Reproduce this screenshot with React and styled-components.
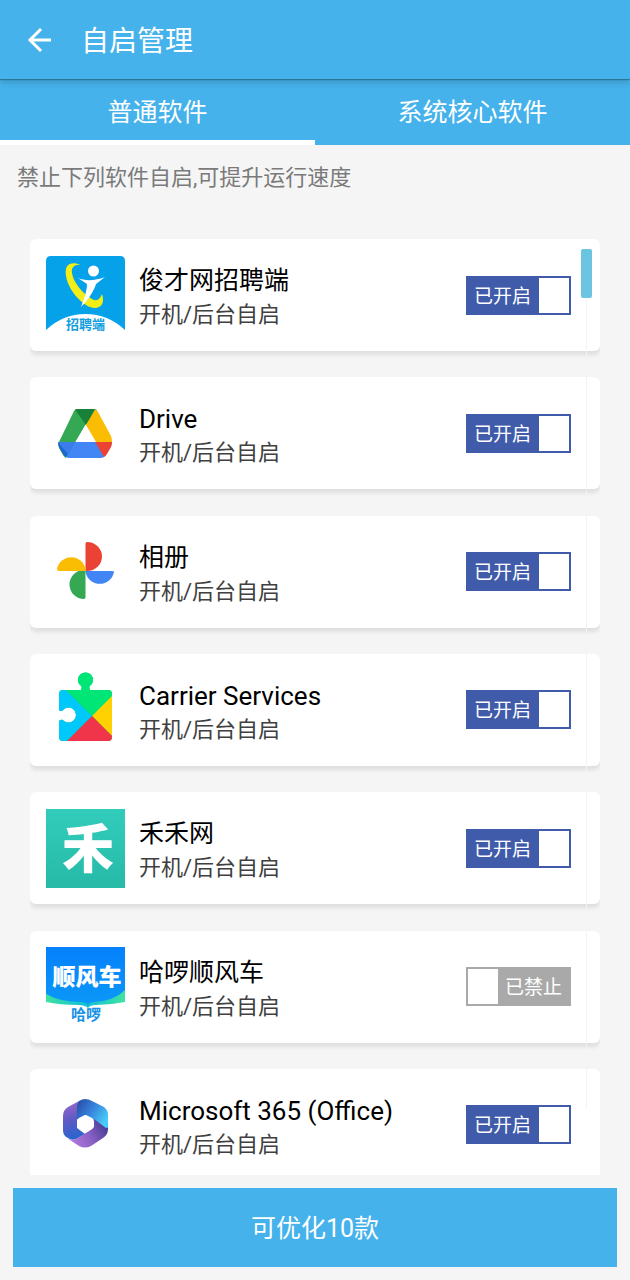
import React, { useState } from 'react'
import styled, { createGlobalStyle } from 'styled-components'

const GlobalStyle = createGlobalStyle`
  * {
    box-sizing: border-box;
  }

  body {
    margin: 0;
    background: #f5f5f5;
    font-family: Roboto, "Noto Sans CJK SC", sans-serif;
  }

  button {
    border: 0;
    padding: 0;
    background: none;
    font-family: inherit;
    cursor: pointer;
  }
`

const Page = styled.div`
  display: flex;
  flex-direction: column;
  height: 100vh;
`

const Header = styled.header`
  position: relative;
  display: flex;
  align-items: center;
  gap: 26px;
  flex: none;
  height: 79px;
  padding: 0 24px;
  background: #45b2eb;
  color: #fff;
  box-shadow: 0 1px 1px rgba(0, 0, 0, 0.25), 0 3px 7px rgba(0, 0, 0, 0.18);
`

const BackButton = styled.button`
  display: flex;
  color: #fff;
`

const Title = styled.h1`
  margin: 0;
  padding-top: 4px;
  font-size: 28px;
  line-height: 40px;
  font-weight: 400;
`

const Tabs = styled.div`
  display: flex;
  flex: none;
  height: 66px;
  background: #45b2eb;
`

const Tab = styled.button`
  flex: 1;
  padding-top: 7px;
  border-bottom: 5px solid ${(props) => (props.$active ? '#fff' : 'transparent')};
  color: #fff;
  font-size: 25px;
  line-height: 36px;
`

const Hint = styled.p`
  flex: none;
  margin: 0;
  padding: 17px 17px 45px;
  color: #7a7a7a;
  font-size: 22px;
  line-height: 32px;
`

const ListArea = styled.main`
  position: relative;
  flex: 1;
  min-height: 0;
  margin: 0 30px;
`

const Scroller = styled.div`
  height: 100%;
  overflow-y: auto;
  scrollbar-width: none;
`

const List = styled.ul`
  display: flex;
  flex-direction: column;
  justify-content: space-between;
  gap: 26px;
  min-height: calc(100% + 6px);
  margin: 0;
  padding: 0;
  list-style: none;
`

const Card = styled.li`
  display: flex;
  align-items: center;
  flex: none;
  height: 112px;
  padding: 0 29px 0 16px;
  border-radius: 6px;
  background: #fff;
  box-shadow: 0 4px 4px rgba(0, 0, 0, 0.09);
`

const AppIcon = styled.svg`
  flex: none;
  width: 79px;
  height: 79px;
  margin-right: 14px;
`

const Info = styled.div`
  flex: 1;
  min-width: 0;
  padding-top: 5px;
`

const Name = styled.h2`
  margin: 0;
  color: #000;
  font-size: ${(props) => (props.$latin ? 26 : 25)}px;
  line-height: 34px;
  font-weight: 400;
`

const Detail = styled.p`
  margin: 0;
  color: #404040;
  font-size: 22px;
  line-height: 33px;
`

const Switch = styled.label`
  position: relative;
  display: flex;
  flex-direction: ${(props) => (props.$on ? 'row' : 'row-reverse')};
  width: 105px;
  height: 39px;
  padding: 2px;
  background: ${(props) => (props.$on ? '#3f5ba9' : '#a9a9a9')};
  color: #fff;
  font-size: 19px;
  line-height: 37px;
  text-align: center;
  cursor: pointer;
`

const SwitchInput = styled.input`
  position: absolute;
  inset: 0;
  width: 100%;
  height: 100%;
  margin: 0;
  opacity: 0;
  cursor: pointer;
`

const SwitchText = styled.span`
  flex: 1;
  padding: ${(props) => (props.$on ? '0 2px 0 0' : '0')};
`

const Knob = styled.span`
  width: 30px;
  background: #fff;
`

const Track = styled.div`
  position: absolute;
  top: 10px;
  right: 8px;
  bottom: 66px;
  width: 11px;
  pointer-events: none;
  background: linear-gradient(#f3f3f3, #f3f3f3) center / 1px 100% no-repeat;
`

const Thumb = styled.div`
  height: 49px;
  border-radius: 2px;
  background: #6bc4e0;
`

const Footer = styled.footer`
  flex: none;
  padding: 13px;
`

const OptimizeButton = styled.button`
  width: 100%;
  height: 79px;
  padding-top: 2px;
  background: #45b2eb;
  color: #fff;
  font-size: 25px;
  line-height: 36px;
`

const IconText = styled.text`
  font-family: "Noto Sans CJK SC", sans-serif;
  font-weight: ${(props) => props.$weight || 700};
  text-anchor: middle;
`

const JuncaiIcon = () => (
  <AppIcon viewBox="0 0 79 79" aria-hidden="true">
    <path d="M0 74V5Q0 0 5 0H74Q79 0 79 5V74Q62 58 39.500 58Q17 58 0 74Z" fill="#05a2ea" />
    <path
      d="M35 9C25 5 18 8 20 20C22 33 34 47 44 51C52 54 60 50 56 38C54 43 51 46 46 43C37 38 27 26 26 17C25 11 29 8 35 9Z"
      fill="#f3ee16"
    />
    <circle cx="47.500" cy="15" r="5.500" fill="#fff" />
    <path d="M32 22C39 25 49 25 59 21L50 28C48 35 42 44 35 51C38 43 41 35 41 28Z" fill="#fff" />
    <IconText x="39.500" y="73" fontSize="13" fill="#149fe0">招聘端</IconText>
  </AppIcon>
)

const DriveIcon = () => (
  <AppIcon viewBox="0 0 79 79" aria-hidden="true">
    <path d="M28 17Q29 15 31 15L40 30L20 64Q18 63 17 61L13 54Q12 51 13 48Z" fill="#34a853" />
    <path d="M29 15.500Q30 15 32 15H47Q49 15 51 16L40 31Z" fill="#188038" />
    <path d="M40 31L49 15.500Q51 16 52 18L65 42Q66 45 66 48H50Z" fill="#fbbc04" />
    <path d="M12 48H66L58 63Q57 64 54 64H24Q21 64 20 63L28 48Z" fill="#4285f4" />
    <path d="M12 48H29L20 63Q18 62 17 60L13 53Q12 51 12 48Z" fill="#1967d2" />
    <path d="M12 48H29L22 60Q16 54 12 48Z" fill="#3b7de9" />
    <path d="M49 48H66Q66 51 65 53L61 60Q60 62 58 63Z" fill="#ea4335" />
    <path d="M39.500 31L49.500 48H29.500Z" fill="#fff" />
  </AppIcon>
)

const PhotosIcon = () => (
  <AppIcon viewBox="0 0 79 79" aria-hidden="true">
    <path d="M39.500 39V12Q39.500 10 41 10A15 14.500 0 0 1 41 39Z" fill="#ea4335" />
    <path d="M39.500 39H66Q68 39 68 40A14.500 14.500 0 0 1 39.500 40Z" fill="#4285f4" />
    <path d="M39.500 38V65Q39.500 67 38 67A14.500 14.500 0 0 1 38 38Z" fill="#34a853" />
    <path d="M39.500 39H13Q11 39 11 37A14.500 14.500 0 0 1 39.500 37Z" fill="#fbbc04" />
  </AppIcon>
)

const CarrierIcon = () => (
  <AppIcon viewBox="0 0 79 79" aria-hidden="true">
    <clipPath id="puzzle">
      <path d="M17 20H35C36 18 36 16 34 15A7.500 7.500 0 1 1 45 15C43 16 43 18 44 20H62Q66 20 66 24V67Q66 71 62 71H17Q13 71 13 67V51C15 49 17 50 18 51A7.500 7.500 0 1 0 18 39C17 41 14 42 13 40V24Q13 20 17 20Z" />
    </clipPath>
    <g clipPath="url(#puzzle)">
      <path d="M0 0H79V79H0Z" fill="#00ca61" />
      <path d="M20 20L46 46L19 73H10V18Z" fill="#00c8fb" />
      <path d="M22 0H79V18L46 46L20 20Z" fill="#00e676" />
      <path d="M46 46L68 24V68Z" fill="#ffd100" />
      <path d="M46 46L70 70V74H18Z" fill="#f0354b" />
    </g>
  </AppIcon>
)

const HeheIcon = () => (
  <AppIcon viewBox="0 0 79 79" aria-hidden="true">
    <defs>
      <linearGradient id="teal" x1="0" y1="0" x2="0" y2="1">
        <stop offset="0" stopColor="#32ccbb" />
        <stop offset="1" stopColor="#26baa7" />
      </linearGradient>
    </defs>
    <path d="M0 0H79V79H0Z" fill="url(#teal)" />
    <IconText $weight={900} x="42" y="59" fontSize="52" fill="#fff">禾</IconText>
  </AppIcon>
)

const HelloIcon = () => (
  <AppIcon viewBox="0 0 79 79" aria-hidden="true">
    <defs>
      <linearGradient id="ride" x1="0" y1="0" x2="0" y2="1">
        <stop offset="0" stopColor="#0580fb" />
        <stop offset="1" stopColor="#0b98f8" />
      </linearGradient>
      <linearGradient id="wave" x1="0" y1="0" x2="1" y2="0">
        <stop offset="0" stopColor="#3fe3a0" />
        <stop offset="0.500" stopColor="#12bfd6" />
        <stop offset="1" stopColor="#3fe3a0" />
      </linearGradient>
    </defs>
    <path d="M0 40H79V55Q64 58 50 58Q44 58 42 61Q39 58 32 58Q14 58 0 55Z" fill="url(#wave)" />
    <path d="M0 0H79V43Q68 54 48 55Q43 55 42 58Q40 55 35 55Q14 55 0 47Z" fill="url(#ride)" />
    <IconText $weight={900} x="41" y="38" fontSize="23" fill="#fff">顺风车</IconText>
    <IconText x="40" y="73" fontSize="15" fill="#1691e5">哈啰</IconText>
  </AppIcon>
)

const OfficeIcon = () => (
  <AppIcon viewBox="0 0 79 79" aria-hidden="true">
    <defs>
      <linearGradient id="officeTop" x1="0" y1="0" x2="1" y2="0.600">
        <stop offset="0" stopColor="#24479f" />
        <stop offset="0.500" stopColor="#367fda" />
        <stop offset="1" stopColor="#47cbf8" />
      </linearGradient>
      <linearGradient id="officeLeft" x1="0.400" y1="0" x2="0.600" y2="1">
        <stop offset="0" stopColor="#9a68cc" />
        <stop offset="0.450" stopColor="#605ac4" />
        <stop offset="1" stopColor="#2465cf" />
      </linearGradient>
      <linearGradient id="officeBottom" x1="0" y1="0.700" x2="1" y2="0.300">
        <stop offset="0" stopColor="#b47be0" />
        <stop offset="0.500" stopColor="#8b61c5" />
        <stop offset="1" stopColor="#443b91" />
      </linearGradient>
    </defs>
    <path d="M33 16Q39 12 46 16L58 22Q62 25 62 30V44L47 38L39 31L30 35V22Q30 18 33 16Z" fill="url(#officeTop)" />
    <path d="M34 15.500L22 22Q17 25 17 31V45Q17 51 22 53Q26 56 30 54L39 49L31 43V22Q31 18 34 15.500Z" fill="url(#officeLeft)" />
    <path d="M62 42V44Q62 50 57 53L45 61Q39 64 33 61L21 53Q26 56 30 54L43 46Q48 43 48 38V34L60 43Q62 43 62 42Z" fill="url(#officeBottom)" />
    <path d="M37 31Q39.500 29 42 31L46 33Q48 34 48 37V41Q48 43 46 44L39.500 48L33 44Q31 43 31 41V37Q31 34 33 33Z" fill="#fff" />
  </AppIcon>
)

const apps = [
  { name: '俊才网招聘端', icon: JuncaiIcon, enabled: true },
  { name: 'Drive', icon: DriveIcon, enabled: true, latin: true },
  { name: '相册', icon: PhotosIcon, enabled: true },
  { name: 'Carrier Services', icon: CarrierIcon, enabled: true, latin: true },
  { name: '禾禾网', icon: HeheIcon, enabled: true },
  { name: '哈啰顺风车', icon: HelloIcon, enabled: false },
  { name: 'Microsoft 365 (Office)', icon: OfficeIcon, enabled: true, latin: true },
]

const AppCard = ({ app }) => {
  const [on, setOn] = useState(app.enabled)
  const Icon = app.icon

  return (
    <Card>
      <Icon />
      <Info>
        <Name $latin={app.latin}>{app.name}</Name>
        <Detail>开机/后台自启</Detail>
      </Info>
      <Switch $on={on}>
        <SwitchInput
          type="checkbox"
          role="switch"
          checked={on}
          onChange={() => setOn(!on)}
        />
        <SwitchText $on={on}>{on ? '已开启' : '已禁止'}</SwitchText>
        <Knob />
      </Switch>
    </Card>
  )
}

const App = () => {
  const [tab, setTab] = useState(0)

  return (
    <>
      <GlobalStyle />
      <Page>
        <Header>
          <BackButton type="button" aria-label="返回">
            <svg width="31" height="32" viewBox="0 0 31 32" fill="none" stroke="currentColor" strokeWidth="3">
              <path d="M27 16H6M17 5L6 16L17 27" />
            </svg>
          </BackButton>
          <Title>自启管理</Title>
        </Header>
        <Tabs role="tablist">
          {['普通软件', '系统核心软件'].map((label, i) => (
            <Tab
              key={label}
              type="button"
              role="tab"
              aria-selected={tab === i}
              $active={tab === i}
              onClick={() => setTab(i)}
            >
              {label}
            </Tab>
          ))}
        </Tabs>
        <Hint>禁止下列软件自启,可提升运行速度</Hint>
        <ListArea>
          <Scroller>
            <List>
              {apps.map((app) => (
                <AppCard key={app.name} app={app} />
              ))}
            </List>
          </Scroller>
          <Track>
            <Thumb />
          </Track>
        </ListArea>
        <Footer>
          <OptimizeButton type="button">可优化10款</OptimizeButton>
        </Footer>
      </Page>
    </>
  )
}

export default App
